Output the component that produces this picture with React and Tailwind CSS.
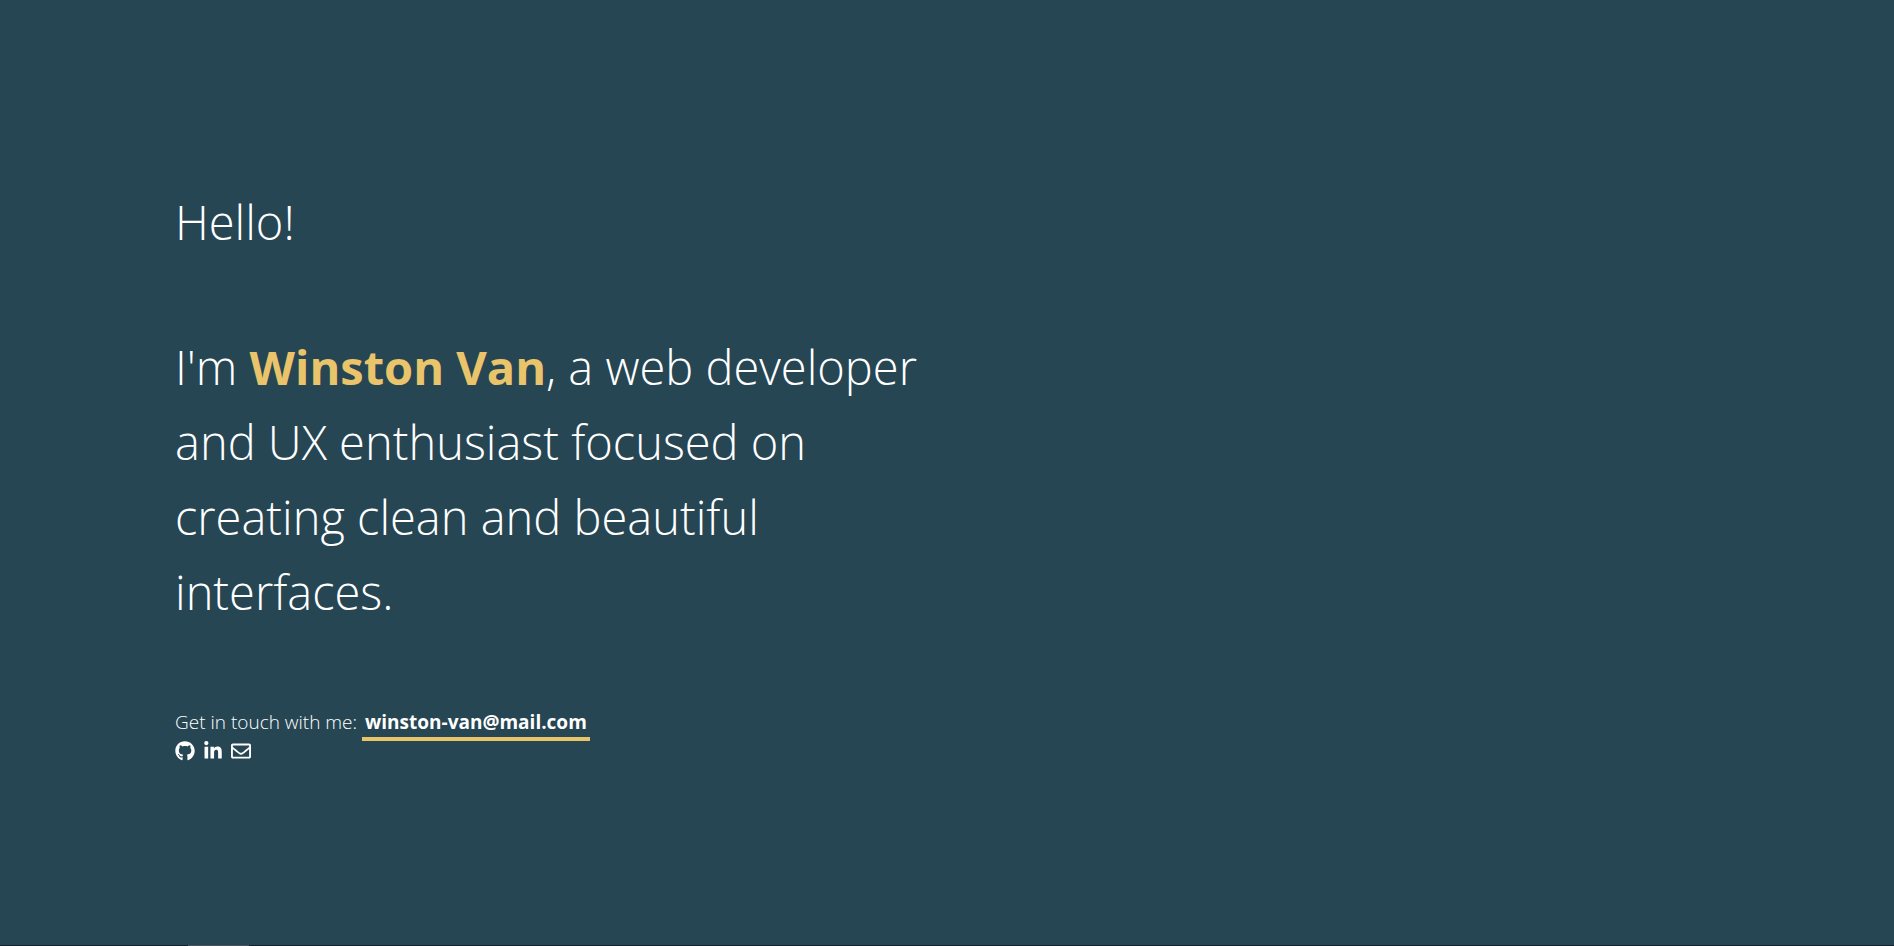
import { FaGithub, FaLinkedinIn, FaRegEnvelope } from "react-icons/fa";

const links = [
  { label: "GitHub", href: "#github", Icon: FaGithub },
  { label: "LinkedIn", href: "#linkedin", Icon: FaLinkedinIn },
  { label: "Email", href: "mailto:winston-van@mail.com", Icon: FaRegEnvelope },
];

export default function App() {
  return (
    <div className="flex h-screen flex-col overflow-hidden bg-[#264653] font-['Open_Sans','Noto_Sans',sans-serif] font-light text-white">
      <main className="flex flex-1 flex-col justify-center px-6 md:pl-[175px]">
        <h1 className="mb-[70px] text-[47px] leading-[75px]">Hello!</h1>
        <p className="mb-[77px] max-w-[780px] text-[47px] leading-[75px]">
          I'm <strong className="font-bold text-[#e9c46a]">Winston Van</strong>, a web developer and UX
          enthusiast focused on creating clean and beautiful interfaces.
        </p>
        <p className="text-[19px] leading-[30px]">
          Get in touch with me:{" "}
          <a
            href="mailto:winston-van@mail.com"
            className="border-b-4 border-[#e9c46a] px-[3px] pb-0.5 font-bold"
          >
            winston-van@mail.com
          </a>
        </p>
        <nav aria-label="Social links" className="mt-1 flex items-center gap-2">
          {links.map(({ label, href, Icon }) => (
            <a key={label} href={href} aria-label={label}>
              <Icon size={20} />
            </a>
          ))}
        </nav>
      </main>
      <footer className="flex h-px bg-[#14202c] pl-[188px]">
        <div className="h-px w-[61px] bg-[#48505c]" />
      </footer>
    </div>
  );
}
